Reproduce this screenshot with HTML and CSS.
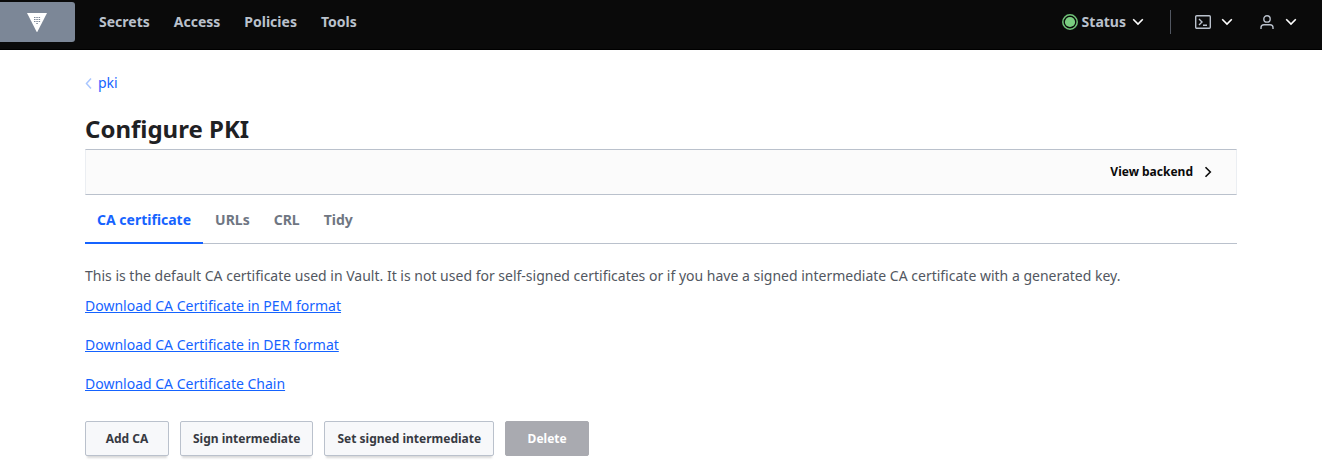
FILE: index.html
```html
<!DOCTYPE html>
<html lang="en">
<head>
<meta charset="utf-8">
<meta name="viewport" content="width=device-width, initial-scale=1">
<title>Configure PKI</title>
<link rel="stylesheet" href="styles.css">
</head>
<body>
<header class="navbar">
  <a class="brand" href="#" aria-label="Vault home">
    <svg width="20" height="20" viewBox="0 0 20 20" aria-hidden="true">
      <path d="M0 1h20L10 20.500z" fill="#fff"/>
      <path d="M7 5h1.500v1H7zM9.300 5h1.500v1H9.300zM11.600 5h1.500v1h-1.500zM7 7h1.500v1H7zM9.300 7h1.500v1H9.300zM11.600 7h1.500v1h-1.500zM7 9h1.500v1H7zM9.300 9h1.500v1H9.300zM11.600 9h1.500v1h-1.500zM9.300 11h1.500v1H9.300z" fill="#7c8797"/>
    </svg>
  </a>
  <nav class="nav-links" aria-label="Main">
    <a href="#">Secrets</a>
    <a href="#">Access</a>
    <a href="#">Policies</a>
    <a href="#">Tools</a>
  </nav>
  <div class="nav-tools">
    <button class="nav-button" type="button">
      <svg width="16" height="16" viewBox="0 0 16 16" aria-hidden="true"><circle cx="8" cy="8" r="7.200" fill="none" stroke="#6fc277" stroke-width="1.500"/><circle cx="8" cy="8" r="5.100" fill="#7ace80"/></svg>
      <span class="status-label">Status</span>
      <svg width="12" height="8" viewBox="0 0 12 8" aria-hidden="true"><path d="M1.200 1.200L6 6l4.800-4.800" fill="none" stroke="#fff" stroke-width="1.600"/></svg>
    </button>
    <span class="divider"></span>
    <button class="nav-button spaced" type="button" aria-label="Console">
      <svg width="16" height="14" viewBox="0 0 16 14" fill="none" stroke="#bac1cc" aria-hidden="true"><rect x=".7" y=".7" width="14.600" height="12.600" rx="1" stroke-width="1.400"/><path d="M4 4l3 3-3 3M8 10.300h4" stroke-width="1.400"/></svg>
      <svg width="12" height="8" viewBox="0 0 12 8" aria-hidden="true"><path d="M1.200 1.200L6 6l4.800-4.800" fill="none" stroke="#fff" stroke-width="1.600"/></svg>
    </button>
    <button class="nav-button spaced user" type="button" aria-label="User menu">
      <svg width="15" height="14" viewBox="0 0 15 14" fill="none" stroke="#bac1cc" stroke-width="1.400" aria-hidden="true"><circle cx="7" cy="3.900" r="3.200"/><path d="M1 14v-1.500Q1 9.700 4 9.700h6q3 0 3 2.800V14"/></svg>
      <svg width="12" height="8" viewBox="0 0 12 8" aria-hidden="true"><path d="M1.200 1.200L6 6l4.800-4.800" fill="none" stroke="#fff" stroke-width="1.600"/></svg>
    </button>
  </div>
</header>
<main class="container">
  <nav class="breadcrumb" aria-label="Breadcrumb">
    <svg width="7" height="13" viewBox="0 0 7 13" aria-hidden="true"><path d="M6 2.500L1.500 7.500 6 12.500" fill="none" stroke="#a9c6ff" stroke-width="1.500"/></svg>
    <a href="#">pki</a>
  </nav>
  <h1 class="title">Configure PKI</h1>
  <div class="toolbar">
    <a class="toolbar-link" href="#">View backend
      <svg width="8" height="12" viewBox="0 0 8 12" aria-hidden="true"><path d="M1.500 1.200L6.300 6l-4.800 4.800" fill="none" stroke="#0a0a0a" stroke-width="1.600"/></svg>
    </a>
  </div>
  <nav class="tabs" aria-label="Configuration">
    <a class="tab active" href="#" aria-current="page">CA certificate</a>
    <a class="tab" href="#">URLs</a>
    <a class="tab" href="#">CRL</a>
    <a class="tab" href="#">Tidy</a>
  </nav>
  <p class="description">This is the default CA certificate used in Vault. It is not used for self-signed certificates or if you have a signed intermediate CA certificate with a generated key.</p>
  <div class="downloads">
    <a href="#">Download CA Certificate in PEM format</a>
    <a href="#">Download CA Certificate in DER format</a>
    <a href="#">Download CA Certificate Chain</a>
  </div>
  <div class="actions">
    <button class="button" type="button">Add CA</button>
    <button class="button" type="button">Sign intermediate</button>
    <button class="button" type="button">Set signed intermediate</button>
    <button class="button danger" type="button" disabled>Delete</button>
  </div>
</main>
</body>
</html>
```
FILE: styles.css
```css
* {
  box-sizing: border-box;
}

body {
  margin: 0;
  background: #fff;
  color: #525761;
  font-family: "Noto Sans", sans-serif;
  font-size: 14px;
  line-height: 21px;
}

a {
  color: #1563ff;
  text-decoration: none;
}

svg {
  display: block;
  flex: none;
}

.navbar {
  display: flex;
  align-items: center;
  padding: 2px 25px 7px 0;
  background: #0a0a0a;
  border-bottom: 1px solid #000;
}

.brand {
  display: flex;
  align-items: center;
  justify-content: center;
  width: 75px;
  height: 40px;
  padding-right: 1px;
  background: #7c8797;
  border-radius: 0 3px 3px 0;
}

.nav-links {
  display: flex;
  gap: 24px;
  padding: 0 0 1px 24px;
}

.nav-links a,
.status-label {
  color: #bac1cc;
  font-weight: 700;
}

.nav-tools {
  display: flex;
  align-items: center;
  margin-left: auto;
}

.nav-button {
  display: flex;
  align-items: center;
  gap: 4px;
  padding: 0;
  border: 0;
  background: none;
  font: inherit;
}

.nav-button.spaced {
  gap: 10px;
}

.nav-button.user {
  margin-left: 27px;
}

.status-label {
  padding: 0 2px 1px 0;
}

.divider {
  width: 1px;
  height: 24px;
  margin: 0 24px 0 26px;
  background: #525761;
}

.container {
  max-width: 1152px;
  margin: 0 auto;
}

.breadcrumb {
  display: flex;
  align-items: center;
  gap: 6px;
  padding-top: 22px;
}

.title {
  margin: 18px 0 2px;
  color: #1f2124;
  font-size: 24px;
  font-weight: 700;
  line-height: 36px;
}

.toolbar {
  display: flex;
  align-items: center;
  justify-content: flex-end;
  padding: 11px 24px 12px;
  background: #fbfbfb;
  border: 1px solid #ebeef2;
  border-top-color: #bac1cc;
  border-bottom-color: #bac1cc;
}

.toolbar-link {
  display: flex;
  align-items: center;
  gap: 11px;
  color: #0a0a0a;
  font-size: 12px;
  font-weight: 700;
}

.tabs {
  display: flex;
  box-shadow: inset 0 -1px 0 #bac1cc;
}

.tab {
  padding: 14px 12px 12px;
  border-bottom: 2px solid transparent;
  color: #6f7682;
  font-weight: 700;
}

.tab.active {
  border-bottom-color: #1563ff;
  color: #1563ff;
}

.description {
  margin: 21px 0 9px;
}

.downloads {
  display: flex;
  flex-direction: column;
  align-items: flex-start;
  gap: 18px;
}

.downloads a {
  text-decoration: underline;
}

.actions {
  display: flex;
  gap: 11px;
  padding: 27px 0 12px;
}

.button {
  min-width: 84px;
  height: 35px;
  padding: 0 12px;
  border: 1px solid #bac1cc;
  border-radius: 2px;
  background: #f7f8fa;
  box-shadow: 0 4px 2px -2px rgba(0, 0, 0, 0.15);
  color: #373a42;
  font: 700 12px/18px "Noto Sans", sans-serif;
}

.button.danger {
  border-color: #a9aab0;
  background: #a9aab0;
  box-shadow: none;
  color: #fff;
}
```
